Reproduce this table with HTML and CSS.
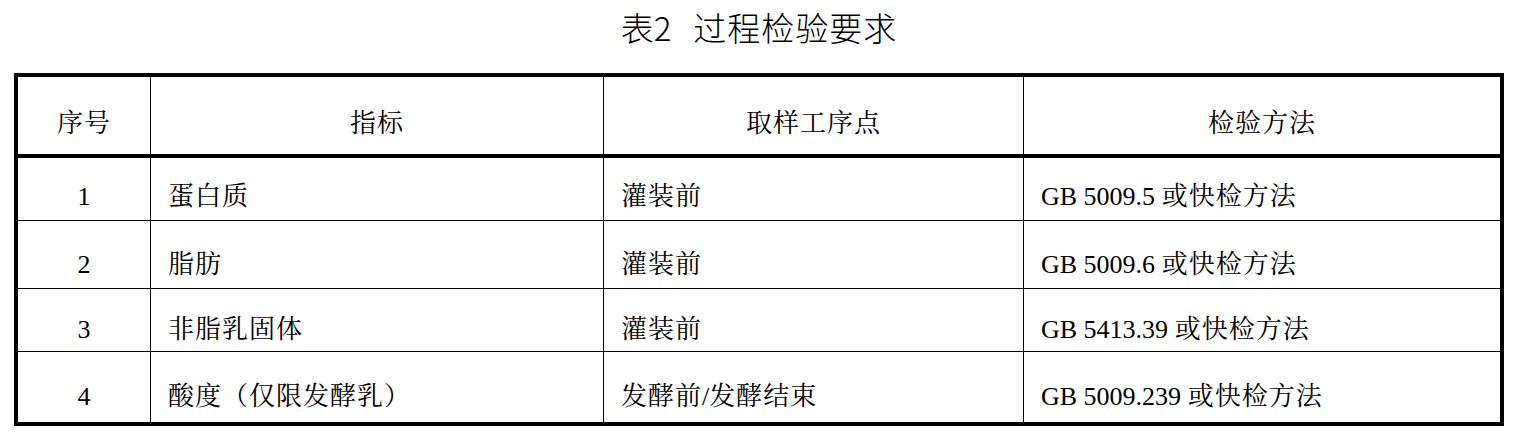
FILE: index.html
```html
<!DOCTYPE html>
<html lang="zh-CN">
<head>
<meta charset="utf-8">
<title>表2 过程检验要求</title>
<link rel="stylesheet" href="styles.css">
</head>
<body>
<div class="page">
  <h1 class="title"><span>表2</span><span class="title-main">过程检验要求</span></h1>
  <table class="spec">
    <colgroup>
      <col class="c1"><col class="c2"><col class="c3"><col class="c4">
    </colgroup>
    <thead>
      <tr class="head">
        <th><span class="zh">序号</span></th>
        <th><span class="zh">指标</span></th>
        <th><span class="zh">取样工序点</span></th>
        <th><span class="zh">检验方法</span></th>
      </tr>
    </thead>
    <tbody>
      <tr class="r1"><td class="num">1</td><td><span class="zh">蛋白质</span></td><td><span class="zh">灌装前</span></td><td>GB 5009.5 <span class="zh">或快检方法</span></td></tr>
      <tr class="r2"><td class="num">2</td><td><span class="zh">脂肪</span></td><td><span class="zh">灌装前</span></td><td>GB 5009.6 <span class="zh">或快检方法</span></td></tr>
      <tr class="r3"><td class="num">3</td><td><span class="zh">非脂乳固体</span></td><td><span class="zh">灌装前</span></td><td>GB 5413.39 <span class="zh">或快检方法</span></td></tr>
      <tr class="r4"><td class="num">4</td><td><span class="zh">酸度（仅限发酵乳）</span></td><td><span class="zh">发酵前</span>/<span class="zh">发酵结束</span></td><td>GB 5009.239 <span class="zh">或快检方法</span></td></tr>
    </tbody>
  </table>
</div>
</body>
</html>
```

FILE: styles.css
```css
html, body {
  margin: 0;
  padding: 0;
  background: #ffffff;
}

.page {
  padding: 10px 0 0 14px;
  width: 1490px;
}

.title {
  margin: 0;
  height: 63px;
  font-family: "Noto Sans CJK SC", "Noto Sans", sans-serif;
  font-weight: 300;
  font-size: 33px;
  line-height: 34px;
  color: #000000;
  text-align: center;
}

.title-main {
  margin-left: 22px;
  letter-spacing: 1px;
}

.spec {
  width: 1490px;
  table-layout: fixed;
  border-collapse: separate;
  border-spacing: 0;
  border: 4px solid #000000;
  font-family: "Liberation Serif", "Noto Serif CJK SC", "Noto Sans CJK SC", serif;
  font-size: 26px;
  line-height: 30px;
  color: #000000;
}

.zh {
  letter-spacing: 1px;
}

.c1 { width: 133px; }
.c2 { width: 453px; }
.c3 { width: 420px; }
.c4 { width: 476px; }

.spec th,
.spec td {
  box-sizing: border-box;
  border-right: 1px solid #000000;
  border-bottom: 1px solid #000000;
  vertical-align: bottom;
  padding: 0 0 8px 17px;
  text-align: left;
  font-weight: 400;
  white-space: nowrap;
}

.spec th:last-child,
.spec td:last-child {
  border-right: none;
}

.spec th {
  text-align: center;
  padding: 0 0 15px 0;
  border-bottom: 4px solid #000000;
}

.spec td.num {
  text-align: center;
  padding-left: 0;
}

.spec tr.r4 td {
  border-bottom: none;
  padding-bottom: 10px;
}

.spec tr.r3 td {
  padding-bottom: 6px;
}

.head { height: 81px; }
.r1 { height: 63px; }
.r2 { height: 68px; }
.r3 { height: 63px; }
.r4 { height: 70px; }
```
